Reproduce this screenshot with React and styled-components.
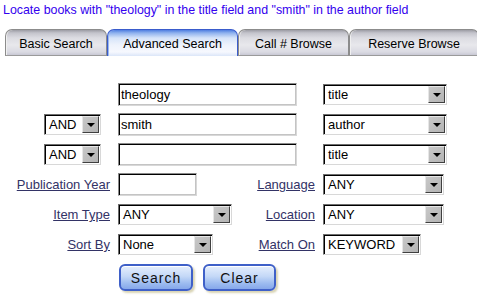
import React from 'react'
import styled, { createGlobalStyle } from 'styled-components'

const GlobalStyle = createGlobalStyle`
  body {
    margin: 0;
    background: #ffffff;
    font-family: "Liberation Sans", Arial, sans-serif;
  }
`

function Select({ value, width }) {
    return (
        <SelectBox $w={width}>
            <SelectValue>{value}</SelectValue>
            <DropButton><Arrow /></DropButton>
        </SelectBox>
    )
}

function App() {
    return (
        <Page>
            <GlobalStyle />
            <Heading>Locate books with "theology" in the title field and "smith" in the author field</Heading>
            <TabBar>
                <Tab $w={102}>Basic Search</Tab>
                <Tab $w={131} $active>Advanced Search</Tab>
                <Tab $w={111}>Call # Browse</Tab>
                <Tab $w={130}>Reserve Browse</Tab>
            </TabBar>
            <Form>
                <TextBox $w={179} $wide defaultValue="theology" />
                <SelectCell><Select value="title" width={124} /></SelectCell>

                <BoolCell><Select value="AND" width={57} /></BoolCell>
                <TextBox $w={179} $wide defaultValue="smith" />
                <SelectCell><Select value="author" width={124} /></SelectCell>

                <BoolCell><Select value="AND" width={57} /></BoolCell>
                <TextBox $w={179} $wide defaultValue="" />
                <SelectCell><Select value="title" width={124} /></SelectCell>

                <Label $col={1} href="#">Publication Year</Label>
                <TextBox $w={79} defaultValue="" />
                <Label $col={3} href="#">Language</Label>
                <SelectCell><Select value="ANY" width={121} /></SelectCell>

                <Label $col={1} href="#">Item Type</Label>
                <ControlCell><Select value="ANY" width={114} /></ControlCell>
                <Label $col={3} href="#">Location</Label>
                <SelectCell><Select value="ANY" width={121} /></SelectCell>

                <Label $col={1} href="#">Sort By</Label>
                <ControlCell><Select value="None" width={95} /></ControlCell>
                <Label $col={3} href="#">Match On</Label>
                <SelectCell><Select value="KEYWORD" width={98} /></SelectCell>

                <Buttons>
                    <Button $w={74}>Search</Button>
                    <Button $w={73}>Clear</Button>
                </Buttons>
            </Form>
        </Page>
    )
}

export default App


const Page = styled.div`
  width: 477px;
  height: 297px;
  overflow: hidden;
`

const Heading = styled.div`
  padding: 3px 0 0 3px;
  font-size: 12.4px;
  line-height: 15px;
  color: #3300ee;
  white-space: nowrap;
`

const TabBar = styled.div`
  display: flex;
  margin-top: 11px;
  padding-left: 5px;
  overflow: hidden;
`

const Tab = styled.div`
  flex-shrink: 0;
  box-sizing: border-box;
  width: ${p => p.$w}px;
  height: 27px;
  display: flex;
  align-items: center;
  justify-content: center;
  padding-top: 2px;
  font-size: 12.5px;
  color: #000;
  border-radius: 7px 7px 0 0;
  border: 1px solid ${p => (p.$active ? '#3a5ccc' : '#8c8c8c')};
  border-bottom: ${p => (p.$active ? 'none' : '1px solid #9a9a9a')};
  background: ${p => p.$active
        ? 'linear-gradient(#4f7ee0 0px, #8fb2ee 3px, #d6e4f9 8px, #eef3fc 15px, #f6f8fe 22px, #dbe6f8 100%)'
        : 'linear-gradient(#9c9ca4 0px, #c4c4cc 3px, #dcdce2 8px, #e8e8ec 15px, #dadae2 22px, #c8c8d4 100%)'};
  box-shadow: inset 1px 0 0 ${p => (p.$active ? '#9ab8f0' : '#f0f0f0')};
`

const Form = styled.div`
  display: grid;
  grid-template-columns: 110px 120px 69px auto;
  grid-auto-rows: 23px;
  column-gap: 8px;
  row-gap: 7px;
  align-items: center;
  margin-top: 27px;
`

const TextBox = styled.input`
  grid-column: ${p => (p.$wide ? '2 / span 2' : '2')};
  justify-self: start;
  box-sizing: border-box;
  width: ${p => p.$w}px;
  height: 23px;
  margin: 0;
  padding: 0 2px;
  font: 13px "Liberation Sans", Arial, sans-serif;
  color: #000;
  background: #fff;
  border: 1px solid;
  border-color: #8a8a8a #d8d8d8 #d8d8d8 #8a8a8a;
  box-shadow: inset 1px 1px 0 #000, inset -1px -1px 0 #c4c4c4;
  outline: none;
`

const BoolCell = styled.div`
  grid-column: 1;
  justify-self: end;
  margin-right: 9px;
  display: flex;
`

const ControlCell = styled.div`
  grid-column: 2;
  display: flex;
`

const SelectCell = styled.div`
  grid-column: 4;
  display: flex;
`

const SelectBox = styled.div`
  display: flex;
  box-sizing: border-box;
  width: ${p => p.$w}px;
  height: 21px;
  background: #fff;
  border: 1px solid;
  border-color: #6e6e6e #d8d8d8 #d8d8d8 #6e6e6e;
  box-shadow: inset 1px 1px 0 #000;
  padding: 1px 1px 1px 1px;
`

const SelectValue = styled.span`
  flex: 1;
  padding-left: 3px;
  font-size: 13px;
  line-height: 17px;
  color: #000;
  white-space: nowrap;
  overflow: hidden;
`

const DropButton = styled.span`
  box-sizing: border-box;
  width: 17px;
  display: flex;
  align-items: center;
  justify-content: center;
  background: linear-gradient(135deg, #c8c8c8, #b4b4b4);
  border: 1px solid;
  border-color: #e6e6e6 #404040 #404040 #e6e6e6;
`

const Arrow = styled.span`
  width: 0;
  height: 0;
  border-left: 4px solid transparent;
  border-right: 4px solid transparent;
  border-top: 4px solid #000;
`

const Label = styled.a`
  grid-column: ${p => p.$col};
  justify-self: end;
  font-size: 13px;
  color: #333366;
  text-decoration: underline;
  white-space: nowrap;
`

const Buttons = styled.div`
  grid-column: 2 / span 3;
  align-self: start;
  display: flex;
  gap: 10px;
  margin: 1px 0 0 1px;
`

const Button = styled.button`
  box-sizing: border-box;
  width: ${p => p.$w}px;
  height: 27px;
  padding: 0;
  border-radius: 6px;
  border: 2px solid #3f60c8;
  background: linear-gradient(#e6effd, #c4d8f7 45%, #9dbcf0 75%, #86a8ea);
  box-shadow: 2px 2px 2px rgba(170, 160, 90, 0.45), inset 0 1px 0 #ffffff;
  font: 14px "Liberation Sans", Arial, sans-serif;
  letter-spacing: 1px;
  color: #111;
`
